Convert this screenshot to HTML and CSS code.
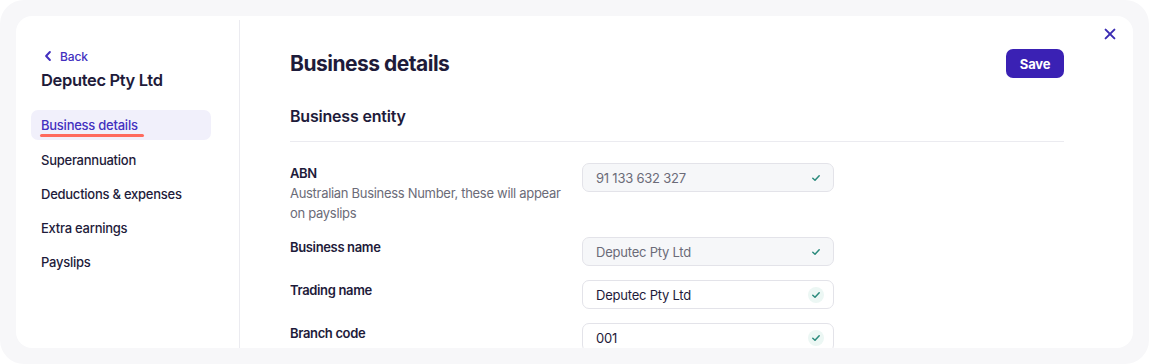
FILE: index.html
```html
<!DOCTYPE html>
<html lang="en">
<head>
<meta charset="utf-8">
<title>Business details</title>
<link rel="stylesheet" href="styles.css">
</head>
<body>
<div class="frame">
  <div class="card">
    <aside class="sidebar">
      <a class="back" href="#">
        <svg class="back-icon" width="16" height="16" viewBox="0 0 16 16" aria-hidden="true"><path d="M8.9 4 5.1 8l3.8 4" fill="none" stroke="currentColor" stroke-width="2" stroke-linecap="round" stroke-linejoin="round"/></svg>
        <span>Back</span>
      </a>
      <h2 class="company">Deputec Pty Ltd</h2>
      <nav class="nav">
        <a class="nav-item active" href="#"><span class="marked">Business details</span></a>
        <a class="nav-item" href="#">Superannuation</a>
        <a class="nav-item" href="#">Deductions &amp; expenses</a>
        <a class="nav-item" href="#">Extra earnings</a>
        <a class="nav-item" href="#">Payslips</a>
      </nav>
    </aside>
    <main class="main">
      <header class="header">
        <h1 class="title">Business details</h1>
        <button class="save" type="button">Save</button>
      </header>
      <h3 class="section-title">Business entity</h3>
      <div class="form">
        <div class="label-col">
          <div class="label">ABN</div>
          <div class="desc">Australian Business Number, these will appear on payslips</div>
        </div>
        <div class="input disabled"><span class="value">91 133 632 327</span><span class="check"><svg width="10" height="10" viewBox="0 0 10 10" aria-hidden="true"><path d="M1.8 5.3 4 7.3l4.2-4.6" fill="none" stroke="currentColor" stroke-width="1.5" stroke-linecap="round" stroke-linejoin="round"/></svg></span></div>

        <div class="label-col"><div class="label">Business name</div></div>
        <div class="input disabled"><span class="value">Deputec Pty Ltd</span><span class="check"><svg width="10" height="10" viewBox="0 0 10 10" aria-hidden="true"><path d="M1.8 5.3 4 7.3l4.2-4.6" fill="none" stroke="currentColor" stroke-width="1.5" stroke-linecap="round" stroke-linejoin="round"/></svg></span></div>

        <div class="label-col"><div class="label">Trading name</div></div>
        <div class="input"><span class="value">Deputec Pty Ltd</span><span class="check"><svg width="10" height="10" viewBox="0 0 10 10" aria-hidden="true"><path d="M1.8 5.3 4 7.3l4.2-4.6" fill="none" stroke="currentColor" stroke-width="1.5" stroke-linecap="round" stroke-linejoin="round"/></svg></span></div>

        <div class="label-col"><div class="label">Branch code</div></div>
        <div class="input"><span class="value">001</span><span class="check"><svg width="10" height="10" viewBox="0 0 10 10" aria-hidden="true"><path d="M1.8 5.3 4 7.3l4.2-4.6" fill="none" stroke="currentColor" stroke-width="1.5" stroke-linecap="round" stroke-linejoin="round"/></svg></span></div>
      </div>
    </main>
    <button class="close" type="button" aria-label="Close">
      <svg width="12" height="12" viewBox="0 0 12 12" aria-hidden="true"><path d="M1.6 1.6l8.8 8.8M10.4 1.6l-8.8 8.8" stroke="currentColor" stroke-width="2" stroke-linecap="round"/></svg>
    </button>
  </div>
</div>
</body>
</html>
```

FILE: styles.css
```css
* { box-sizing: border-box; }
html, body { margin: 0; padding: 0; background: #ffffff; }
body {
  font-family: Inter, "Noto Sans", "Liberation Sans", sans-serif;
  color: #1e1b3a;
  -webkit-font-smoothing: antialiased;
}
.frame {
  width: 1149px;
  height: 364px;
  background: #f7f7f9;
  border-radius: 24px;
  padding: 16px;
}
.card {
  position: relative;
  height: 332px;
  background: #ffffff;
  border-radius: 16px;
  display: flex;
  overflow: hidden;
}
.sidebar {
  flex: 0 0 224px;
  margin-top: 4px;
  border-right: 1px solid #ebebf0;
  padding: 28px 28px 0 15px;
}
.back {
  display: flex;
  align-items: center;
  gap: 3px;
  margin-left: 10px;
  height: 16px;
  font-size: 12px;
  font-weight: 500;
  letter-spacing: -0.1px;
  color: #4330bf;
  text-decoration: none;
}
.back-icon { display: block; }
.company {
  margin: 4px 0 0 10px;
  font-size: 16.5px;
  line-height: 24px;
  font-weight: 600;
  letter-spacing: -0.35px;
  color: #1e1b3a;
}
.nav {
  margin-top: 18px;
  display: flex;
  flex-direction: column;
  gap: 4px;
}
.nav-item {
  display: block;
  height: 30px;
  line-height: 30px;
  padding: 0 10px;
  border-radius: 7px;
  font-size: 13px;
  font-weight: 500;
  letter-spacing: -0.25px;
  color: #1e1b3a;
  text-decoration: none;
}
.nav-item.active {
  background: #f1f0fb;
  color: #4330bf;
  margin-bottom: 1px;
}
.marked { position: relative; display: inline-block; }
.marked::after {
  content: "";
  position: absolute;
  left: -1px;
  right: -6px;
  top: 24px;
  height: 3px;
  border-radius: 2px;
  background: #ff6a5e;
}
.main {
  flex: 1;
  padding: 33px 69px 0 50px;
  overflow: hidden;
}
.header {
  display: flex;
  align-items: center;
  justify-content: space-between;
  height: 29px;
}
.title {
  margin: 0;
  font-size: 21px;
  line-height: 29px;
  font-weight: 700;
  color: #1e1b3a;
  letter-spacing: -0.5px;
}
.save {
  width: 58px;
  height: 29px;
  border: none;
  border-radius: 7px;
  background: #3a21b4;
  color: #ffffff;
  font-family: inherit;
  font-size: 13px;
  font-weight: 700;
  letter-spacing: -0.2px;
  padding: 0;
}
.section-title {
  margin: 26px 0 0;
  padding-bottom: 13px;
  border-bottom: 1px solid #ebebf0;
  font-size: 16px;
  line-height: 24px;
  font-weight: 600;
  letter-spacing: -0.2px;
  color: #1e1b3a;
}
.form {
  margin-top: 21px;
  display: grid;
  grid-template-columns: 272px 252px;
  column-gap: 20px;
  row-gap: 14px;
  align-items: start;
}
.label {
  font-size: 13px;
  line-height: 20px;
  font-weight: 600;
  letter-spacing: -0.35px;
  color: #1e1b3a;
}
.desc {
  font-size: 13px;
  line-height: 20px;
  letter-spacing: -0.3px;
  color: #6b6b78;
}
.input {
  height: 29px;
  border: 1px solid #e3e3e9;
  border-radius: 7px;
  background: #ffffff;
  display: flex;
  align-items: center;
  justify-content: space-between;
  padding: 0 9px 0 13px;
  font-size: 13px;
  letter-spacing: -0.22px;
  color: #1e1b3a;
}
.input.disabled {
  background: #f6f7f9;
  color: #6b6b78;
}
.check {
  width: 16px;
  height: 16px;
  border-radius: 50%;
  background: #ecf7f4;
  color: #2a8a7c;
  display: flex;
  align-items: center;
  justify-content: center;
}
.input.disabled .check { background: transparent; }
.check svg { display: block; }
.close {
  position: absolute;
  top: 12px;
  right: 17px;
  width: 12px;
  height: 12px;
  padding: 0;
  border: none;
  background: none;
  color: #3a2bb3;
  display: flex;
}
.close svg { display: block; }
```
